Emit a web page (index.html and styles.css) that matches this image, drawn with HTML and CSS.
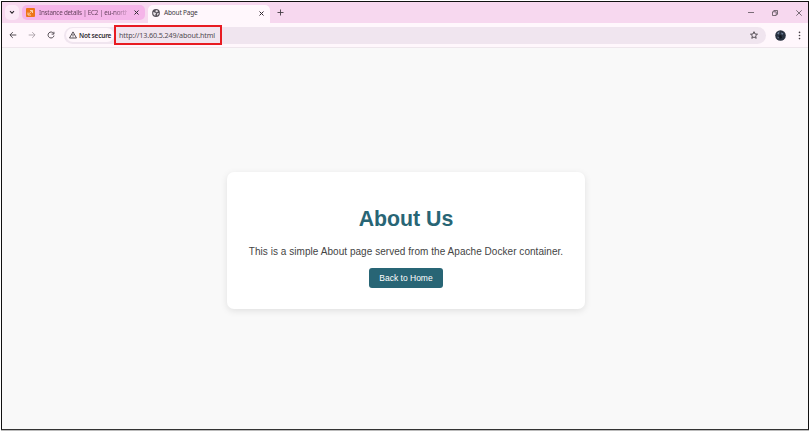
FILE: index.html
```html
<!DOCTYPE html>
<html lang="en">
<head>
<meta charset="utf-8">
<title>About Page</title>
<link rel="stylesheet" href="styles.css">
</head>
<body>
<div class="window">
  <header class="tabs">
    <div class="tab-search"><svg width="6" height="5" viewBox="0 0 6 5"><path d="M1 1.2 3 3.2 5 1.2"/></svg></div>
    <div class="tab">
      <svg class="ec2" width="9" height="9" viewBox="0 0 9 9"><rect width="9" height="9" rx="1"/><path d="M2 4.5V7h3M4 2.5h2.5V5M3 5.8 6.2 2.6"/></svg>
      <span class="tab-title">Instance details | EC2 | eu-north</span>
      <svg class="close" width="5" height="5" viewBox="0 0 5 5"><path d="M.5.5l4 4M4.5.5l-4 4"/></svg>
    </div>
    <div class="tab active">
      <svg class="globe" width="8" height="8" viewBox="0 0 8 8"><circle cx="4" cy="4" r="3.9"/><path d="M.8 3.2 3 3.5 4.2 4.6 3.4 5.2v1.5L1.8 6ZM4 .9l2.1.8-.5 1.2-1.6.4-.6-1ZM5.2 4.2l1.8-.2-.9 2-1.1.4Z"/></svg>
      <span class="tab-title">About Page</span>
      <svg class="close" width="5" height="5" viewBox="0 0 5 5"><path d="M.5.5l4 4M4.5.5l-4 4"/></svg>
    </div>
    <svg class="new-tab" width="7" height="7" viewBox="0 0 7 7"><path d="M3.5.5v6M.5 3.5h6"/></svg>
    <div class="controls">
      <svg width="6" height="6" viewBox="0 0 6 6"><path d="M0 2.5h6"/></svg>
      <svg width="6" height="6" viewBox="0 0 6 6"><path d="M.5 1.8h3.7v3.7H.5ZM1.8 1.6V.5h3.7v3.8h-1.1"/></svg>
      <svg width="6" height="6" viewBox="0 0 6 6"><path d="M.3.3l5.4 5.4M5.7.3.3 5.7"/></svg>
    </div>
  </header>
  <nav class="toolbar">
    <svg class="nav-icon" width="8" height="8" viewBox="0 0 8 8"><path d="M7.3 4H1M3.8 1.1.9 4l2.9 2.9"/></svg>
    <svg class="nav-icon muted" width="8" height="8" viewBox="0 0 8 8"><path d="M.7 4H7M4.2 1.1 7.1 4 4.2 6.9"/></svg>
    <svg class="nav-icon" width="8" height="8" viewBox="0 0 8 8"><path d="M6.6 2.4A3 3 0 1 0 7 4.6M6.9.8v2.3H4.6"/></svg>
    <div class="address">
      <div class="security"><svg width="8" height="8" viewBox="0 0 8 8"><path d="M4 .9 7.5 7h-7ZM4 3v2M4 5.5v.8"/></svg><span>Not secure</span></div>
      <span class="url">http://13.60.5.249/about.html</span>
      <svg class="star" width="8" height="8" viewBox="0 0 8 8"><path d="M4 .7 5 3l2.5.2-1.9 1.6.6 2.5L4 6 1.8 7.3l.6-2.5L.5 3.2 3 3Z"/></svg>
    </div>
    <svg class="avatar" width="11" height="11" viewBox="0 0 11 11"><circle cx="5.5" cy="5.5" r="5.3" fill="#293140"/><path d="M2 3.5 4.5 1.3 4 4.5ZM6 2.5l2.5 1L7 5Z" fill="#71829c"/><path d="M4 5.5 6.2 5 7 8 4.8 8.8Z" fill="#10151e"/><path d="M2 6.5l1.8 1-.4 1Z" fill="#8593a7"/></svg>
    <svg class="menu" width="3" height="9" viewBox="0 0 3 9"><circle cx="1.5" cy="1.4" r=".8"/><circle cx="1.5" cy="4.5" r=".8"/><circle cx="1.5" cy="7.6" r=".8"/></svg>
    <div class="highlight"></div>
  </nav>
  <main class="page">
    <section class="card">
      <h1>About Us</h1>
      <p>This is a simple About page served from the Apache Docker container.</p>
      <a class="button">Back to Home</a>
    </section>
  </main>
</div>
</body>
</html>
```
FILE: styles.css
```css
* { box-sizing: border-box; }
body { margin: 0; height: 431px; padding: 1px; background: #fff; overflow: hidden; font-family: "Liberation Sans", Arial, sans-serif; }
svg { display: block; flex: none; fill: none; stroke: #443d44; stroke-width: .9; }
.window { height: 429px; display: flex; flex-direction: column; border: 1px solid #111; border-bottom-color: #333; background: #f9f9f9; box-shadow: 0 1px #bbb; }
.tabs { height: 21px; flex: none; display: flex; align-items: center; background: #f7d8ef; font-family: "Noto Sans", sans-serif; }
.tab-search { width: 14px; height: 15px; margin-left: 3px; border-radius: 5px; background: #fceaf7; display: flex; align-items: center; justify-content: center; }
.tab-search svg { stroke: #302930; stroke-width: 1.1; }
.tab { display: flex; align-items: center; width: 123px; height: 15px; margin-left: 3px; padding: 0 6px 0 4px; border-radius: 5px; background: #f5b5e9; }
.tab-title { flex: 1; min-width: 0; margin-left: 4px; white-space: nowrap; font-size: 6.5px; letter-spacing: -.12px; line-height: 10px; color: #67435f; }
.tab:not(.active) .tab-title { margin-right: 7px; font-size: 6.3px; letter-spacing: -.23px; -webkit-mask-image: linear-gradient(90deg, #000 85%, transparent 105%); mask-image: linear-gradient(90deg, #000 85%, transparent 105%); }
.tab.active { width: 122px; height: 18px; align-self: flex-end; margin-left: 3px; padding-bottom: 2px; background: #fff7fc; border-radius: 5px 5px 0 0; }
.active .tab-title { color: #3d373c; letter-spacing: -.18px; }
.ec2 { stroke: #ffe8c9; stroke-width: .8; }
.ec2 rect { fill: #ed7519; stroke: none; }
.globe { stroke: none; }
.globe circle { fill: #57515a; }
.globe path { fill: #e8e2e7; }
.close { stroke: #302930; stroke-width: 1; }
.new-tab { margin-left: 7px; }
.controls { display: flex; gap: 18px; margin-left: auto; margin-right: 6px; }
.controls svg { stroke-width: .7; }
.toolbar { position: relative; height: 25px; flex: none; display: flex; align-items: center; padding: 0 7px; background: #fff7fc; border-bottom: 1px solid #eee6ec; }
.nav-icon { margin-right: 11px; }
.nav-icon.muted { stroke: #aaa0a8; }
.address { flex: 1; height: 17px; margin-left: -2px; padding: 0 8px 0 2px; display: flex; align-items: center; background: #f0e5ef; border-radius: 9px; font-family: "Noto Sans", sans-serif; }
.security { display: flex; align-items: center; gap: 2px; width: 48px; height: 14px; padding-left: 3px; border-radius: 7px; background: #fff7fc; font-size: 6.5px; letter-spacing: -.22px; font-weight: 600; color: #302b31; white-space: nowrap; }
.url { margin-left: 5px; font-size: 7.2px; letter-spacing: -.14px; line-height: 10px; color: #514b52; white-space: nowrap; }
.star { margin-left: auto; }
.avatar { margin-left: 9px; stroke: none; }
.menu { margin-left: 12px; fill: #443d44; stroke: none; }
.highlight { position: absolute; left: 112px; top: 2px; width: 108px; height: 20px; border: 2px solid #e81b22; }
.page { flex: 1; display: flex; align-items: center; justify-content: center; padding: 3px 0 0 2px; }
.card { width: 358px; height: 137px; padding: 34px 0 0; border-radius: 7px; background: #fff; box-shadow: 0 2px 7px rgba(0,0,0,.1); text-align: center; }
h1 { margin: 0; font-size: 21.3px; line-height: 26px; color: #286575; }
p { margin: 13px 0 8px; font-size: 10px; letter-spacing: .045px; line-height: 14px; color: #444; white-space: nowrap; }
.button { display: inline-flex; align-items: center; justify-content: center; width: 74px; height: 20px; border-radius: 3px; background: #286575; color: #fff; font-size: 8.5px; white-space: nowrap; }
```
